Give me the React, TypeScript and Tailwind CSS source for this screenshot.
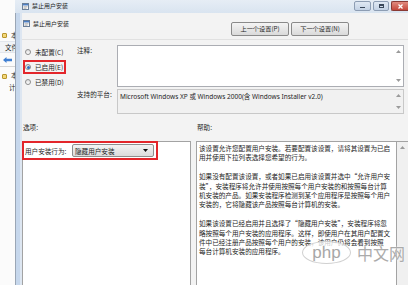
import React from "react";

const cjk = "font-['Noto_Sans_CJK_SC','Noto_Sans',sans-serif]";

const helpLines = [
  "该设置允许您配置用户安装。若要配置该设置，请将其设置为已启",
  "用并使用下拉列表选择您希望的行为。",
  "",
  "如果没有配置该设置，或者如果已启用该设置并选中“允许用户安",
  "装”，安装程序将允许并使用按照每个用户安装的和按照每台计算",
  "机安装的产品。如果安装程序检测到某个应用程序是按照每个用户",
  "安装的，它将隐藏该产品按照每台计算机的安装。",
  "",
  "如果该设置已经启用并且选择了“隐藏用户安装”，安装程序将忽",
  "略按照每个用户安装的应用程序。这样，即使用户在其用户配置文",
  "件中已经注册产品按照每个用户的安装，该用户仍将会看到按照",
  "每台计算机安装的应用程序。",
];

function Arrow({ up }: { up?: boolean }) {
  return (
    <svg width="5" height="3" viewBox="0 0 5 3">
      <path d={up ? "M0 3L2.5 0L5 3Z" : "M0 0L5 0L2.5 3Z"} fill="#9a9a9a" />
    </svg>
  );
}

function PolicyIcon() {
  return (
    <svg width="7" height="7" viewBox="0 0 7 7">
      <rect x="0.5" y="0.5" width="6" height="6" fill="#fff" stroke="#6b7f99" />
      <rect x="1" y="1" width="5" height="1.5" fill="#4d7fc4" />
      <path d="M1.5 3.8H5.5M1.5 5.2H4.5" stroke="#8a8a8a" strokeWidth="0.7" />
    </svg>
  );
}

function Radio({ label, checked, boxed }: { label: string; checked?: boolean; boxed?: boolean }) {
  return (
    <div
      className={`ml-[1px] flex h-[14px] w-[43px] items-center gap-[4px] border-2 ${
        boxed ? "border-[#e3262b]" : "border-transparent"
      }`}
    >
      <span className="flex h-[6px] w-[6px] items-center justify-center rounded-full border border-[#8d8d8d] bg-gradient-to-b from-[#dedede] to-white">
        {checked && <span className="h-[3px] w-[3px] rounded-full bg-[#2f6fc0]" />}
      </span>
      <span className="whitespace-nowrap">{label}</span>
    </div>
  );
}

function WinButton({ children }: { children: React.ReactNode }) {
  return (
    <div className="flex h-[14px] w-[58px] items-center justify-center rounded-[2px] border border-[#8a8a8a] bg-gradient-to-b from-[#f4f4f4] to-[#dadada] whitespace-nowrap text-[6.2px] leading-[8px]">
      {children}
    </div>
  );
}

export default function App() {
  return (
    <div className={`relative flex h-[285px] w-[408px] overflow-hidden bg-white text-[#1e1e1e] ${cjk}`}>
      {/* background window */}
      <div className="flex w-[15px] shrink-0 flex-col overflow-hidden bg-[#fbfbfb] text-[6.5px] leading-[8px]">
        <div className="h-[29px] shrink-0" />
        <div className="flex h-[12px] shrink-0 items-center gap-[4px] pl-[2px]">
          <span className="h-[5px] w-[5px] shrink-0 rounded-[1px] border border-[#b8962e] bg-[#f3d77a]" />
          <span className="whitespace-nowrap">本地</span>
        </div>
        <div className="flex h-[12px] shrink-0 items-center border-y border-[#e2e6ec] bg-[#f1f3f6] pl-[5px]">
          <span className="whitespace-nowrap">文件</span>
        </div>
        <div className="flex h-[13px] shrink-0 items-center pl-[3px]">
          <svg width="9" height="6" viewBox="0 0 9 6">
            <path d="M0 3L3.5 0V1.8H9V4.2H3.5V6Z" fill="#3f7fd2" />
          </svg>
        </div>
        <div className="h-px shrink-0 bg-[#d6d6d6]" />
        <div className="flex h-[12px] shrink-0 items-end gap-[4px] pl-[2px]">
          <span className="h-[5px] w-[5px] shrink-0 rounded-[1px] border border-[#b8962e] bg-[#f3d77a]" />
          <span className="whitespace-nowrap">本</span>
        </div>
        <div className="flex h-[12px] shrink-0 items-end gap-[3px] pl-[6px]">
          <svg width="3" height="3" viewBox="0 0 3 3">
            <path d="M3 0V3H0Z" fill="#444" />
          </svg>
          <span className="whitespace-nowrap">计</span>
        </div>
      </div>

      {/* dialog window */}
      <div className="flex flex-1 flex-col">
        {/* title bar */}
        <div className="flex h-[13px] shrink-0 items-start bg-gradient-to-b from-[#e6edf5] to-[#d9e4f0]">
          <div className="flex items-center gap-[3px] pl-[7px] pt-[2px]">
            <PolicyIcon />
            <span className="whitespace-nowrap text-[6px] leading-[8px]">禁止用户安装</span>
          </div>
          <div className="ml-auto flex gap-[2px] pt-[1px]">
            <div className="flex h-[10px] w-[17px] items-end justify-center rounded-[2px] border border-[#8d9db3] bg-gradient-to-b from-[#dfe8f3] to-[#c3d2e5] pb-[2px]">
              <span className="h-[1.5px] w-[5px] bg-[#39475a]" />
            </div>
            <div className="flex h-[10px] w-[16px] items-center justify-center rounded-[2px] border border-[#8d9db3] bg-gradient-to-b from-[#dfe8f3] to-[#c3d2e5]">
              <span className="h-[4px] w-[5px] border border-t-2 border-[#39475a]" />
            </div>
            <div className="flex h-[10px] w-[17px] items-center justify-center rounded-l-[2px] border border-r-0 border-[#8a3a34] bg-gradient-to-b from-[#e08a7f] to-[#c4463b]">
              <svg width="5" height="5" viewBox="0 0 5 5">
                <path d="M0.5 0.5L4.5 4.5M4.5 0.5L0.5 4.5" stroke="#fff" strokeWidth="1.3" />
              </svg>
            </div>
          </div>
        </div>

        <div className="flex flex-1">
          {/* left frame */}
          <div className="flex w-[7px] shrink-0">
            <div className="w-px bg-[#9aa6b5]" />
            <div className="w-[4px] bg-[#c6d7ec]" />
            <div className="w-[2px] bg-[#dde6f1]" />
          </div>

          {/* body */}
          <div className="flex flex-1 flex-col overflow-hidden bg-[#f3f3f3] text-[6.6px] leading-[8px]">
            <div className="flex h-[26px] shrink-0">
              <div className="flex w-[209px] items-start gap-[3px] pl-[1px] pt-[7px]">
                <PolicyIcon />
                <span className="whitespace-nowrap text-[6px] leading-[8px]">禁止用户安装</span>
              </div>
              <div className="flex gap-[2px] pt-[9px]">
                <WinButton>上一个设置(P)</WinButton>
                <WinButton>下一个设置(N)</WinButton>
              </div>
            </div>
            <div className="h-px shrink-0 bg-[#e1e1e1]" />

            {/* state + comment + platform */}
            <div className="flex h-[78px] shrink-0 pt-[5px]">
              <div className="flex w-[55px] flex-col gap-[1px]">
                <Radio label="未配置(C)" />
                <Radio label="已启用(E)" checked boxed />
                <Radio label="已禁用(D)" />
              </div>
              <div className="flex w-[40px] flex-col">
                <span className="h-[44px] whitespace-nowrap pt-[1px]">注释:</span>
                <span className="whitespace-nowrap pt-[1px]">支持的平台:</span>
              </div>
              <div className="flex w-[287px] flex-col gap-[2px]">
                <div className="flex h-[42px] border border-[#abadb3] bg-white">
                  <div className="flex-1" />
                  <div className="flex w-[10px] flex-col items-center justify-between py-[4px]">
                    <Arrow up />
                    <Arrow />
                  </div>
                </div>
                <div className="flex h-[25px] border border-[#c8c8c8] bg-[#f1f1f1]">
                  <div className="flex-1 whitespace-nowrap pl-[2px] pt-[3px] font-['Noto_Sans','Noto_Sans_CJK_SC',sans-serif] text-[6.5px]">
                    Microsoft Windows XP 或 Windows 2000(含 Windows Installer v2.0)
                  </div>
                  <div className="flex w-[10px] flex-col items-center justify-between py-[4px]">
                    <Arrow up />
                    <Arrow />
                  </div>
                </div>
              </div>
            </div>

            {/* section labels */}
            <div className="flex h-[23px] shrink-0 pt-[5px]">
              <span className="w-[175px] pl-[1px]">选项:</span>
              <span>帮助:</span>
            </div>

            {/* panels */}
            <div className="flex h-[150px] shrink-0 gap-[5px]">
              <div className="w-[169px] border border-[#a3a3a3] bg-white">
                <div className="-ml-px -mt-px flex h-[19px] w-[136px] items-center border-2 border-[#e3262b] bg-white">
                  <span className="w-[48px] whitespace-nowrap pl-[1px]">用户安装行为:</span>
                  <div className="flex h-[13px] w-[82px] items-center rounded-[2px] border border-[#8e8f8f] bg-gradient-to-b from-[#f3f3f3] to-[#dcdcdc] pl-[2px] pr-[5px]">
                    <span className="whitespace-nowrap">隐藏用户安装</span>
                    <svg className="ml-auto" width="5" height="3" viewBox="0 0 5 3">
                      <path d="M0 0L5 0L2.5 3Z" fill="#111" />
                    </svg>
                  </div>
                </div>
              </div>
              <div className="flex flex-1 border border-r-0 border-[#a3a3a3] bg-white">
                <div className="w-[200px] border-r border-[#a3a3a3] pl-[2px] pt-[2px] text-[6.6px] leading-[9.4px]">
                  {helpLines.map((line, i) => (
                    <div key={i} className="h-[9.4px] whitespace-nowrap">
                      {line}
                    </div>
                  ))}
                </div>
                <div className="flex flex-1 justify-center bg-[#f0f0f0] pt-[4px]">
                  <Arrow up />
                </div>
              </div>
            </div>
          </div>
        </div>
      </div>

      {/* watermark */}
      <div className="absolute left-[302px] top-[241px] flex items-center gap-[6px]">
        <div className="flex h-[23px] w-[49px] items-center justify-center rounded-[50%] border border-[#d0d0d0] bg-white/75">
          <span className="font-['Liberation_Sans',sans-serif] text-[17px] leading-[17px] text-[#a7a7a7]">php</span>
        </div>
        <span className="text-[16px] leading-[16px] text-[#ababab] [text-shadow:0_0_2px_#fff]">中文网</span>
      </div>
    </div>
  );
}
